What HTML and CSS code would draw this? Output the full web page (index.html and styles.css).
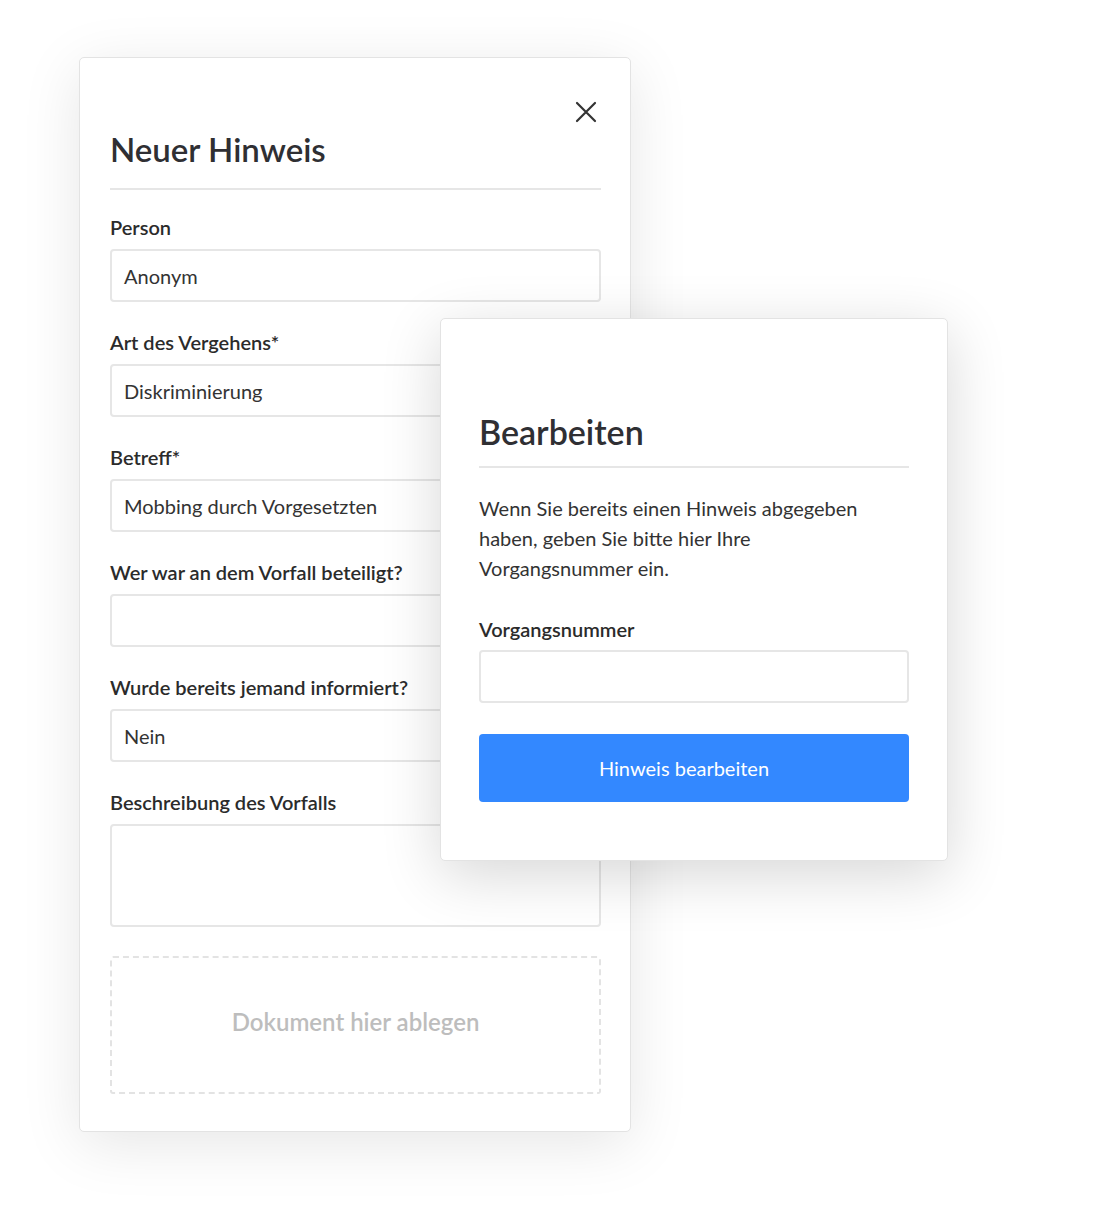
FILE: index.html
```html
<!DOCTYPE html>
<html lang="de">
<head>
<meta charset="utf-8">
<title>Neuer Hinweis</title>
<link rel="stylesheet" href="styles.css">
</head>
<body>
<div class="stage">
  <section class="card card-main">
    <header class="card-head">
      <button class="close" aria-label="Schließen">
        <svg width="22" height="22" viewBox="0 0 22 22"><path d="M2 2 L20 20 M20 2 L2 20" stroke="#333" stroke-width="2.2" stroke-linecap="round" fill="none"/></svg>
      </button>
      <h1 class="title">Neuer Hinweis</h1>
    </header>
    <div class="field">
      <label class="label">Person</label>
      <div class="input">Anonym</div>
    </div>
    <div class="field">
      <label class="label">Art des Vergehens*</label>
      <div class="input">Diskriminierung</div>
    </div>
    <div class="field">
      <label class="label">Betreff*</label>
      <div class="input">Mobbing durch Vorgesetzten</div>
    </div>
    <div class="field">
      <label class="label">Wer war an dem Vorfall beteiligt?</label>
      <div class="input"></div>
    </div>
    <div class="field">
      <label class="label">Wurde bereits jemand informiert?</label>
      <div class="input">Nein</div>
    </div>
    <div class="field field-last">
      <label class="label">Beschreibung des Vorfalls</label>
      <div class="input textarea"></div>
    </div>
    <div class="dropzone">Dokument hier ablegen</div>
  </section>

  <section class="card card-edit">
    <h2 class="title title-edit">Bearbeiten</h2>
    <p class="text">Wenn Sie bereits einen Hinweis abgegeben<br>haben, geben Sie bitte hier Ihre<br>Vorgangsnummer ein.</p>
    <label class="label label-edit">Vorgangsnummer</label>
    <div class="input"></div>
    <button class="btn">Hinweis bearbeiten</button>
  </section>
</div>
</body>
</html>
```

FILE: styles.css
```css
html, body {
  margin: 0;
  padding: 0;
  background: #ffffff;
}
body {
  font-family: Lato, "Noto Sans", sans-serif;
  color: #333333;
  width: 1093px;
  height: 1232px;
  overflow: hidden;
}
.stage {
  position: relative;
  padding: 57px 0 0 79px;
}
.card {
  background: #ffffff;
  border: 1px solid #e3e3e3;
  border-radius: 5px;
  box-sizing: border-box;
}
.card-main {
  width: 552px;
  padding: 0 29px 37px 30px;
  box-shadow: 0 12px 60px rgba(0, 0, 0, 0.10);
}
.card-head {
  display: flex;
  flex-direction: column;
  border-bottom: 2px solid #e6e6e6;
  padding-bottom: 19px;
  margin-bottom: 25px;
}
.close {
  align-self: flex-end;
  margin: 43px 4px 0 0;
  padding: 0;
  border: 0;
  background: none;
  width: 22px;
  height: 22px;
  display: flex;
}
.title {
  margin: 6px 0 0 0;
  font-size: 33px;
  line-height: 40px;
  font-weight: 600;
  color: #2f2f33;
}
.field {
  display: flex;
  flex-direction: column;
  margin-bottom: 28px;
}
.label {
  font-size: 20px;
  line-height: 24px;
  font-weight: 600;
  color: #2b2b2b;
  margin-bottom: 10px;
}
.input {
  height: 53px;
  box-sizing: border-box;
  border: 2px solid #e6e6e6;
  border-radius: 4px;
  padding: 0 12px;
  display: flex;
  align-items: center;
  font-size: 20px;
  color: #333;
  background: #fff;
}
.textarea {
  height: 103px;
}
.field-last {
  margin-bottom: 29px;
}
.dropzone {
  height: 138px;
  border: 2px dashed #e3e3e3;
  border-radius: 3px;
  padding-bottom: 8px;
  display: flex;
  align-items: center;
  justify-content: center;
  font-size: 24px;
  font-weight: 600;
  color: #bdbdbd;
  box-sizing: border-box;
}
.card-edit {
  position: absolute;
  left: 440px;
  top: 318px;
  width: 508px;
  height: 543px;
  padding: 92px 38px 0 38px;
  display: flex;
  flex-direction: column;
  box-shadow: 0 14px 60px rgba(0, 0, 0, 0.16);
}
.title-edit {
  font-size: 34px;
  line-height: 42px;
  margin: 0;
  padding-bottom: 13px;
  border-bottom: 2px solid #e6e6e6;
}
.text {
  margin: 25px 0 0 0;
  font-size: 20px;
  line-height: 30px;
  color: #333;
}
.label-edit {
  margin-top: 34px;
  margin-bottom: 9px;
}
.btn {
  margin-top: 31px;
  height: 68px;
  border: 0;
  border-radius: 4px;
  padding: 0 20px 0 0;
  background: #3388ff;
  color: #ffffff;
  font-family: Lato, "Noto Sans", sans-serif;
  font-size: 20px;
}
```
